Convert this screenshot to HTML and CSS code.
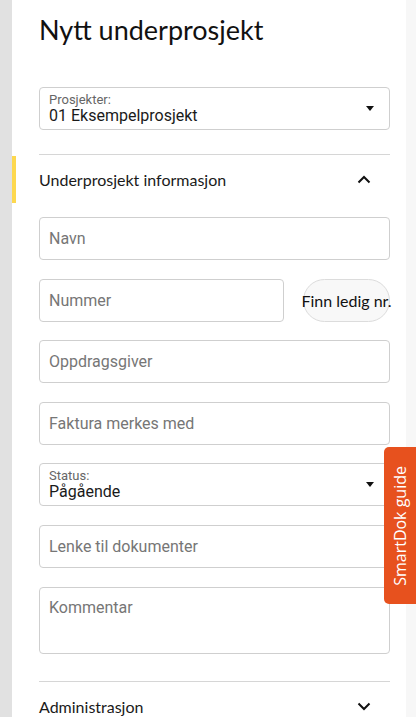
FILE: index.html
```html
<!DOCTYPE html>
<html lang="no">
<head>
<meta charset="utf-8">
<title>Nytt underprosjekt</title>
<link rel="stylesheet" href="styles.css">
</head>
<body>
<div class="layout">
  <div class="rail"></div>
  <main class="panel">
    <h1 class="title">Nytt underprosjekt</h1>

    <div class="field select">
      <span class="select-label">Prosjekter:</span>
      <span class="select-value">01 Eksempelprosjekt</span>
      <span class="caret"></span>
    </div>

    <hr class="divider top-divider">

    <div class="section-head active">
      <span>Underprosjekt informasjon</span>
      <svg class="chev" width="14" height="9" viewBox="0 0 14 9"><path d="M1.5 7.5 L7 2 L12.5 7.5" fill="none" stroke="#111" stroke-width="2"/></svg>
    </div>

    <div class="fields">
      <div class="field"><span class="ph">Navn</span></div>
      <div class="row">
        <div class="field grow"><span class="ph">Nummer</span></div>
        <button class="pill">Finn ledig nr.</button>
      </div>
      <div class="field"><span class="ph">Oppdragsgiver</span></div>
      <div class="field"><span class="ph">Faktura merkes med</span></div>
      <div class="field select">
        <span class="select-label">Status:</span>
        <span class="select-value">Pågående</span>
        <span class="caret"></span>
      </div>
      <div class="field"><span class="ph">Lenke til dokumenter</span></div>
      <div class="field area"><span class="ph">Kommentar</span></div>
    </div>

    <hr class="divider bottom-divider">

    <div class="section-head">
      <span>Administrasjon</span>
      <svg class="chev" width="14" height="9" viewBox="0 0 14 9"><path d="M1.5 1.5 L7 7 L12.5 1.5" fill="none" stroke="#111" stroke-width="2"/></svg>
    </div>
  </main>
  <div class="gutter"></div>
</div>
<div class="guide-tab"><span>SmartDok guide</span></div>
</body>
</html>
```

FILE: styles.css
```css
html, body {
  margin: 0;
  padding: 0;
  height: 100%;
  overflow: hidden;
}
body {
  font-family: Lato, "Noto Sans", sans-serif;
  color: #1d1d1d;
  background: #f7f7f7;
}
.layout {
  display: flex;
  min-height: 100%;
}
.rail {
  width: 12px;
  flex: 0 0 12px;
  background: #e1e1e1;
}
.panel {
  width: 394px;
  flex: 0 0 394px;
  box-sizing: border-box;
  background: #fff;
  padding: 0 16px 0 27px;
}
.gutter {
  flex: 1;
  background: #f7f7f7;
}
.title {
  margin: 0;
  padding-top: 15px;
  font-size: 27px;
  font-weight: 400;
  line-height: 30px;
  color: #111;
  height: 72px;
}
.field {
  box-sizing: border-box;
  height: 43px;
  border: 1px solid #cfcfcf;
  border-radius: 4px;
  display: flex;
  align-items: center;
  padding: 0 9px;
  font-family: Roboto, "Noto Sans", sans-serif;
  font-size: 16px;
  position: relative;
}
.ph {
  color: #767676;
}
.select {
  flex-direction: column;
  align-items: flex-start;
  justify-content: center;
}
.select-label {
  font-size: 13px;
  color: #666;
  line-height: 15px;
}
.select-value {
  font-size: 16px;
  color: #1a1a1a;
  line-height: 18px;
}
.caret {
  position: absolute;
  right: 15px;
  top: 18px;
  width: 0;
  height: 0;
  border-left: 4.5px solid transparent;
  border-right: 4.5px solid transparent;
  border-top: 5px solid #111;
}
.divider {
  border: 0;
  border-top: 1px solid #d6d6d6;
  margin: 0;
}
.top-divider {
  margin-top: 24px;
}
.section-head {
  margin: 1px 0 0 -27px;
  padding: 0 19px 0 23px;
  height: 47px;
  display: flex;
  align-items: center;
  justify-content: space-between;
  font-size: 16px;
  color: #1a1a1a;
  border-left: 4px solid transparent;
  box-sizing: border-box;
}
.section-head.active {
  border-left-color: #fdd84f;
}
.chev {
  display: block;
}
.fields {
  margin-top: 14px;
  display: flex;
  flex-direction: column;
  gap: 18.6px;
}
.row {
  display: flex;
  gap: 19px;
}
.grow {
  flex: 1;
}
.pill {
  flex: 0 0 87px;
  width: 87px;
  height: 43px;
  box-sizing: border-box;
  border: 1px solid #dcdcdc;
  border-radius: 22px;
  background: #f8f8f8;
  font-family: Lato, "Noto Sans", sans-serif;
  font-size: 16px;
  color: #111;
  padding: 0;
  white-space: nowrap;
  display: flex;
  align-items: center;
  justify-content: center;
  overflow: visible;
}
.area {
  height: 67px;
  align-items: flex-start;
  padding-top: 10px;
}
.bottom-divider {
  margin-top: 27px;
}
.guide-tab {
  position: fixed;
  right: 0;
  top: 447px;
  width: 32px;
  height: 157px;
  background: #e7511e;
  border-radius: 5px 0 0 5px;
  display: flex;
  align-items: center;
  justify-content: center;
}
.guide-tab span {
  writing-mode: vertical-rl;
  transform: rotate(180deg);
  color: #fff;
  font-family: "Open Sans", "Noto Sans", sans-serif;
  font-size: 16px;
  font-weight: 500;
  white-space: nowrap;
}
```
